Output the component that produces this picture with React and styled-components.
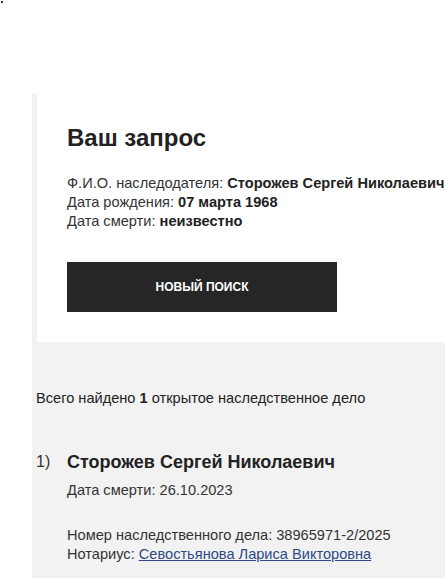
import styled, { createGlobalStyle } from 'styled-components'

const GlobalStyle = createGlobalStyle`
  body {
    margin: 0;
    background: #fff;
    font-family: "Liberation Sans", Arial, sans-serif;
    color: #222;
  }
`

const Dot = styled.span`
  display: block;
  width: 2px;
  height: 2px;
  margin: 1px 0 0 1px;
  background: #2b2b8a;
`

const Page = styled.div`
  padding: 90px 0 0 32px;
`

const Section = styled.div`
  background: #f2f2f2;
  min-height: 488px;
`

const Card = styled.div`
  margin-left: 5px;
  background: #fff;
  padding: 30px;
`

const Title = styled.h2`
  margin: 0 0 21px;
  font-size: 24px;
  line-height: 30px;
  font-weight: 600;
  color: #222;
`

const Info = styled.div`
  font-size: 14.6px;
  line-height: 19px;
  color: #333;
  white-space: nowrap;

  b {
    color: #222;
  }
`

const Button = styled.button`
  display: flex;
  align-items: center;
  justify-content: center;
  margin-top: 31px;
  width: 270px;
  height: 50px;
  border: 0;
  background: #262626;
  color: #fff;
  font-family: inherit;
  font-size: 12px;
  font-weight: 700;
  cursor: pointer;
`

const Summary = styled.p`
  margin: 0;
  padding: 47px 0 0 4px;
  font-size: 14.6px;
  line-height: 19px;
  color: #222;
`

const Result = styled.div`
  display: flex;
  padding: 43px 0 0 4px;
`

const Num = styled.span`
  width: 31px;
  font-size: 16px;
  line-height: 22px;
  color: #333;
`

const ResultBody = styled.div`
  display: flex;
  flex-direction: column;
`

const Name = styled.div`
  font-size: 18px;
  line-height: 22px;
  font-weight: 700;
  color: #222;
`

const Line = styled.div`
  font-size: 14.6px;
  line-height: 19px;
  color: #333;
  margin-top: ${({ gap }) => gap || 0}px;
`

const Link = styled.a`
  color: #2e4a86;
  text-decoration: underline;
`

const App = () => (
  <>
    <GlobalStyle />
    <Dot />
    <Page>
      <Section>
        <Card>
          <Title>Ваш запрос</Title>
          <Info>
            Ф.И.О. наследодателя: <b>Сторожев Сергей Николаевич</b>
          </Info>
          <Info>
            Дата рождения: <b>07 марта 1968</b>
          </Info>
          <Info>
            Дата смерти: <b>неизвестно</b>
          </Info>
          <Button>НОВЫЙ ПОИСК</Button>
        </Card>
        <Summary>
          Всего найдено <b>1</b> открытое наследственное дело
        </Summary>
        <Result>
          <Num>1)</Num>
          <ResultBody>
            <Name>Сторожев Сергей Николаевич</Name>
            <Line gap={8}>Дата смерти: 26.10.2023</Line>
            <Line gap={26}>Номер наследственного дела: 38965971-2/2025</Line>
            <Line>
              Нотариус: <Link href="#">Севостьянова Лариса Викторовна</Link>
            </Line>
          </ResultBody>
        </Result>
      </Section>
    </Page>
  </>
)

export default App
